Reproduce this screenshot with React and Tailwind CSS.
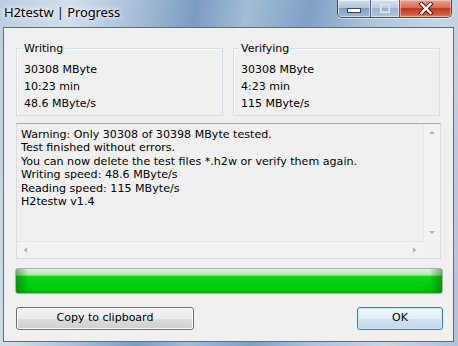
import React from 'react';

const GroupBox = ({ title, lines }) => (
    <div className="relative w-[207px] h-[68px] border border-[#d5dfe5] shadow-[inset_1px_1px_0_#fbfbfb] pl-[7px] pt-[11.5px]">
        <span className="absolute -top-[7px] left-[5px] px-[2px] bg-[#f0f0f0] leading-[13px]">{title}</span>
        {lines.map((l) => (
            <div key={l} className="leading-[17px]">{l}</div>
        ))}
    </div>
);

const Arrow = ({ dir }) => {
    const pts = {
        up: '0,4 3,1 6,4',
        down: '0,1 3,4 6,1',
        left: '4,0 1,3 4,6',
        right: '1,0 4,3 1,6',
    };
    return (
        <svg width="6" height="6" viewBox="0 0 6 6">
            <polygon points={pts[dir]} fill="#b4b4b4" />
        </svg>
    );
};

const logLines = [
    'Warning: Only 30308 of 30398 MByte tested.',
    'Test finished without errors.',
    'You can now delete the test files *.h2w or verify them again.',
    'Writing speed: 48.6 MByte/s',
    'Reading speed: 115 MByte/s',
    'H2testw v1.4',
];

export default function App() {
    return (
        <div className="w-[458px] h-[346px] overflow-hidden flex flex-col bg-[linear-gradient(100deg,#bccee0_0%,#d0deeb_14%,#a9c0d8_26%,#7b9dc2_38%,#a3bcd7_48%,#7fa1c5_60%,#adc4db_72%,#c6d6e6_86%,#aec3d9_100%)] font-['DejaVu_Sans',sans-serif] text-[11px] text-black">
            {/* title bar */}
            <div className="h-[27px] flex items-start justify-between">
                <div className="mt-[5.5px] pl-[4px] font-['Noto_Sans',sans-serif] text-[13px] leading-[13px] tracking-[-0.1px] text-black [text-shadow:0_0_8px_#ffffff,0_0_4px_#ffffff]">
                    H2testw | Progress
                </div>
                <div className="mr-[6px] flex h-[18px] rounded-b-[5px] border border-t-0 border-[#3d4f66] overflow-hidden shadow-[0_1px_0_rgba(255,255,255,0.6)]">
                    <div className="w-[33px] h-full flex items-end justify-center pb-[4px] bg-[linear-gradient(to_bottom,#d2deec_0%,#b0c4da_45%,#839fc0_50%,#9fb9d6_100%)] border-r border-[#4f627a] shadow-[inset_0_0_0_1px_rgba(255,255,255,0.5)]">
                        <svg width="14" height="5" viewBox="0 0 14 5">
                            <rect x="0.5" y="0.5" width="13" height="4" fill="#ffffff" stroke="#36465a" />
                        </svg>
                    </div>
                    <div className="w-[29px] h-full flex items-center justify-center bg-[linear-gradient(to_bottom,#d6e1ee_0%,#bccde0_45%,#9cb4cf_50%,#b0c6dc_100%)] border-r border-[#4f627a] shadow-[inset_0_0_0_1px_rgba(255,255,255,0.5)]">
                        <svg width="10" height="9" viewBox="0 0 10 9">
                            <rect x="0.5" y="0.5" width="9" height="8" fill="none" stroke="#e3eaf2" />
                            <rect x="1.5" y="2.5" width="7" height="5" fill="none" stroke="#c6d3e1" />
                        </svg>
                    </div>
                    <div className="w-[51px] h-full flex items-center justify-center bg-[linear-gradient(to_bottom,#e8a393_0%,#d56c52_45%,#bf3a20_50%,#d35c40_85%,#e38a70_100%)] shadow-[inset_0_0_0_1px_rgba(255,220,210,0.5)]">
                        <svg width="16" height="13" viewBox="0 0 16 13">
                            <path d="M3.5 2 L12.5 11 M12.5 2 L3.5 11" stroke="#4a1a12" strokeWidth="4.2" strokeLinecap="square" />
                            <path d="M3.5 2 L12.5 11 M12.5 2 L3.5 11" stroke="#ffffff" strokeWidth="2.4" strokeLinecap="square" />
                        </svg>
                    </div>
                </div>
            </div>

            {/* client area */}
            <div className="ml-[3px] w-[451px] h-[315px] border border-[#5a6d82] bg-[#f0f0f0] flex flex-col">
                <div className="mt-[20px] pl-[12px] flex gap-[10px]">
                    <GroupBox title="Writing" lines={['30308 MByte', '10:23 min', '48.6 MByte/s']} />
                    <GroupBox title="Verifying" lines={['30308 MByte', '4:23 min', '115 MByte/s']} />
                </div>

                {/* log box */}
                <div className="mt-[7px] ml-[12px] w-[425px] h-[136px] border border-[#dadcdf] border-t-[#a9abaf] flex flex-col">
                    <div className="flex h-[117px]">
                        <div className="flex-1 pl-[4px] pt-[3.5px] overflow-hidden whitespace-nowrap text-[11.1px]">
                            {logLines.map((l) => (
                                <div key={l} className="leading-[13.6px]">{l}</div>
                            ))}
                        </div>
                        <div className="w-[17px] flex flex-col justify-between bg-[#f3f3f3] border-l border-[#e6e6e6]">
                            <div className="h-[17px] flex items-center justify-center"><Arrow dir="up" /></div>
                            <div className="h-[17px] flex items-center justify-center"><Arrow dir="down" /></div>
                        </div>
                    </div>
                    <div className="flex h-[17px]">
                        <div className="flex-1 flex justify-between bg-[#f3f3f3] border-t border-[#e6e6e6]">
                            <div className="w-[17px] flex items-center justify-center"><Arrow dir="left" /></div>
                            <div className="w-[17px] flex items-center justify-center"><Arrow dir="right" /></div>
                        </div>
                        <div className="w-[17px] bg-[#f0f0f0]" />
                    </div>
                </div>

                {/* progress bar */}
                <div className="mt-[9px] ml-[11px] w-[428px] h-[26px] rounded-[3px] border border-[#b0b0b0] overflow-hidden bg-[linear-gradient(to_right,rgba(0,90,0,0.45)_0%,rgba(0,90,0,0)_3%,rgba(0,90,0,0)_97%,rgba(0,90,0,0.45)_100%),linear-gradient(to_bottom,#dcf5dc_0%,#bdeebd_18%,#9fe69f_26%,#1ad21a_30%,#00cf10_60%,#00c40c_88%,#00a808_100%)]" />

                {/* buttons */}
                <div className="mt-[13px] pl-[12px] pr-[10px] flex justify-between">
                    <div className="w-[178px] h-[23px] rounded-[3px] border border-[#707070] flex items-center justify-center bg-[linear-gradient(to_bottom,#f3f3f3_0%,#ebebeb_50%,#dddddd_51%,#cfcfcf_100%)] shadow-[inset_0_0_0_1px_#fbfbfb]">
                        Copy to clipboard
                    </div>
                    <div className="w-[86px] h-[23px] rounded-[3px] border border-[#3c7fb1] flex items-center justify-center bg-[linear-gradient(to_bottom,#eef6fb_0%,#e2eef6_50%,#cfe2ef_51%,#c2d9ea_100%)] shadow-[inset_0_0_0_1px_#c6e8fb]">
                        OK
                    </div>
                </div>
            </div>
        </div>
    );
}
